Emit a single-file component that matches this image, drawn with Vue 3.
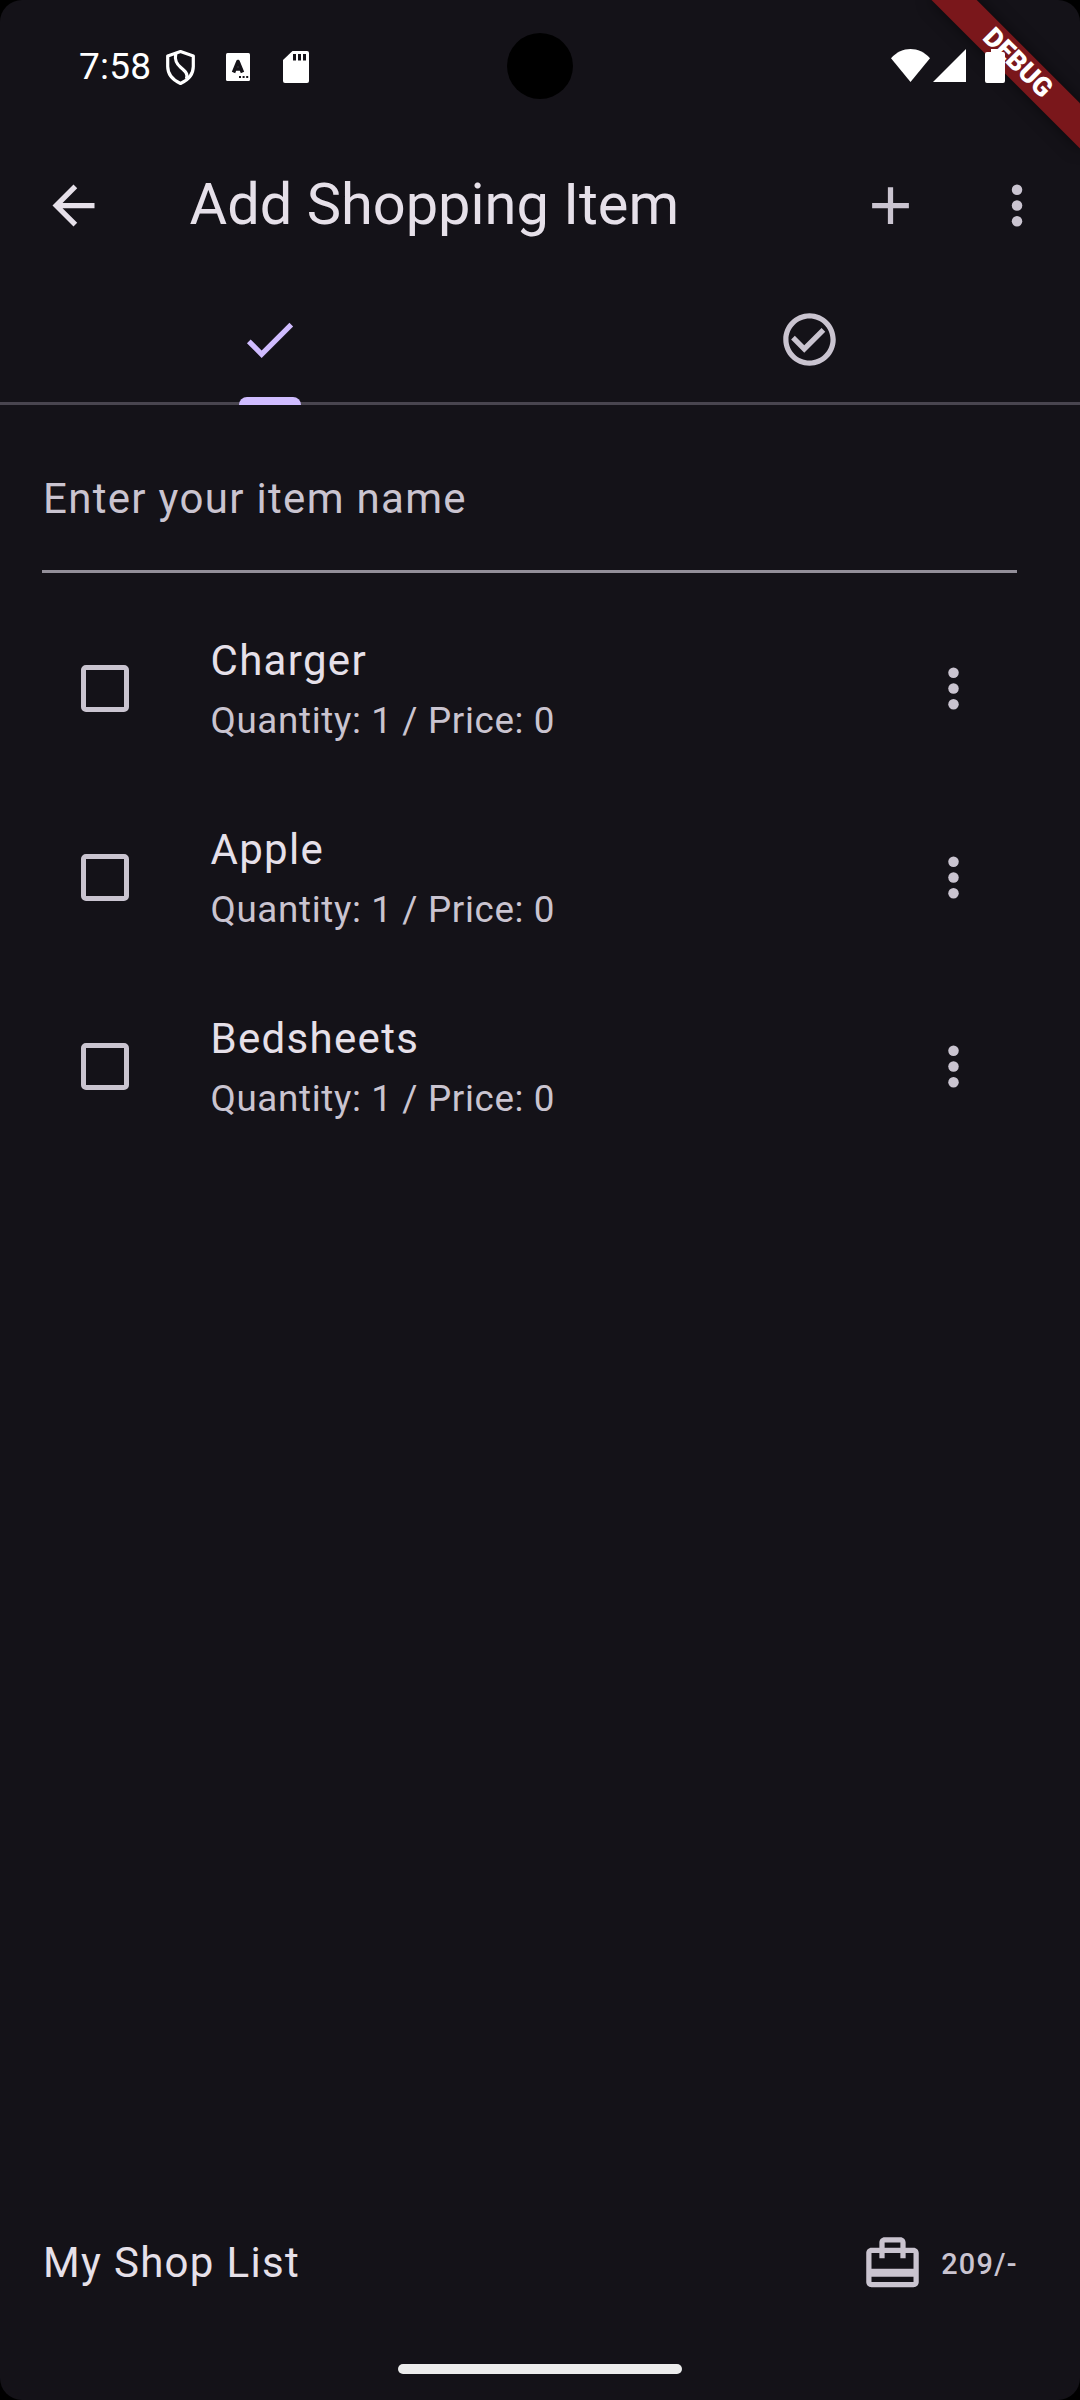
<script setup>
import { ref } from 'vue'

const items = ref([
  { name: 'Charger', quantity: 1, price: 0 },
  { name: 'Apple', quantity: 1, price: 0 },
  { name: 'Bedsheets', quantity: 1, price: 0 },
])
const total = ref(209)
</script>

<template>
  <div class="screen">
    <div class="ribbon-clip"><div class="ribbon">DEBUG</div></div>
    <div class="camera"></div>

    <header class="status">
      <span class="clock">7:58</span>
      <svg class="shield" viewBox="0 0 31 37" fill="none" stroke="#fff" stroke-width="3.2" stroke-linejoin="round">
        <path d="M15.500 2.600 2.700 7v10.500c0 7.500 5 13.500 12.800 17 7.800-3.500 12.800-9.500 12.800-17V7z" />
        <path d="M10.800 4.500c-1.500 7 1 10.500 5 14 4.500 3.800 7.700 6.500 5.500 11.500" />
      </svg>
      <svg class="letter" viewBox="0 0 24 28">
        <rect width="24" height="28" rx="1.500" fill="#fff" />
        <path d="M7.500 19.500 12 8.500l4.500 11M9 16h6" fill="none" stroke="#141218" stroke-width="3.600" stroke-linejoin="round" />
        <path d="M13 23h2v2h-2zM16.600 23h2v2h-2zM20.200 23h2v2h-2z" fill="#141218" />
      </svg>
      <svg class="card" viewBox="0 0 26 32">
        <path d="M9.500 0H24a2 2 0 0 1 2 2v28a2 2 0 0 1-2 2H2a2 2 0 0 1-2-2V9z" fill="#fff" />
        <path d="M10 3h3v6.500h-3zM15 3h3v6.500h-3zM20 3h3v6.500h-3z" fill="#141218" />
      </svg>
      <span class="grow"></span>
      <svg class="wifi" viewBox="0 0 39 33"><path d="M0 9.200C11-3 28-3 39 9.200L19.500 33z" fill="#fff" /></svg>
      <svg class="signal" viewBox="0 0 33 33"><path d="M33 0v33H0z" fill="#fff" /></svg>
      <svg class="battery" viewBox="0 0 20 34">
        <path d="M6 0h8v3h4a2 2 0 0 1 2 2v27a2 2 0 0 1-2 2H2a2 2 0 0 1-2-2V5a2 2 0 0 1 2-2h4z" fill="#fff" />
      </svg>
    </header>

    <nav class="appbar">
      <svg class="icon bright" viewBox="0 0 24 24"><path d="M20 11H7.830l5.590-5.590L12 4l-8 8 8 8 1.410-1.410L7.830 13H20z" /></svg>
      <h1>Add Shopping Item</h1>
      <svg class="icon" viewBox="0 0 24 24"><path d="M19 13h-6v6h-2v-6H5v-2h6V5h2v6h6z" /></svg>
      <svg class="icon" viewBox="0 0 24 24"><circle cx="12.200" cy="6" r="2" /><circle cx="12.200" cy="12" r="2" /><circle cx="12.200" cy="18" r="2" /></svg>
    </nav>

    <div class="tabs">
      <div class="tab active">
        <svg class="icon" viewBox="0 0 24 24"><path d="M9 16.170 4.830 12l-1.420 1.410L9 19 21 7l-1.410-1.410z" /></svg>
        <span class="indicator"></span>
      </div>
      <div class="tab">
        <svg class="icon" viewBox="0 0 24 24"><path d="M16.590 7.580 10 14.170l-3.590-3.580L5 12l5 5 8-8zM12 2C6.480 2 2 6.480 2 12s4.480 10 10 10 10-4.480 10-10S17.520 2 12 2zm0 18c-4.420 0-8-3.580-8-8s3.580-8 8-8 8 3.580 8 8-3.580 8-8 8z" /></svg>
      </div>
    </div>

    <div class="field">Enter your item name</div>

    <ul class="list">
      <li v-for="item in items" :key="item.name">
        <span class="checkbox"></span>
        <div class="text">
          <div class="name">{{ item.name }}</div>
          <div class="detail">Quantity: {{ item.quantity }} / Price: {{ item.price }}</div>
        </div>
        <svg class="icon" viewBox="0 0 24 24"><circle cx="12" cy="6" r="2" /><circle cx="12" cy="12" r="2" /><circle cx="12" cy="18" r="2" /></svg>
      </li>
    </ul>

    <footer class="summary">
      <span class="label">My Shop List</span>
      <svg class="icon" viewBox="0 0 24 24"><path d="M20 6h-3V4c0-1.110-.890-2-2-2H9c-1.110 0-2 .890-2 2v2H4c-1.110 0-2 .890-2 2v11c0 1.110.890 2 2 2h16c1.110 0 2-.890 2-2V8c0-1.110-.890-2-2-2zM9 4h6v2H9V4zm11 15H4v-2h16v2zm0-5H4V8h3v2h2V8h6v2h2V8h3v6z" /></svg>
      <span class="total">{{ total }}/-</span>
    </footer>
    <div class="home"></div>
  </div>
</template>

<style>
body {
  margin: 0;
  background: #000;
}
</style>

<style scoped>
.screen {
  position: relative;
  display: flex;
  flex-direction: column;
  box-sizing: border-box;
  width: 1080px;
  height: 2400px;
  overflow: hidden;
  border-radius: 22px;
  background: #141218;
  color: #e6e0e9;
  font-family: Roboto, sans-serif;
  font-size: 42px;
}
svg {
  display: block;
  flex: none;
}
.icon {
  width: 63px;
  height: 63px;
  fill: #cac4d0;
}
.icon.bright {
  fill: #e6e0e9;
}

.ribbon-clip {
  position: absolute;
  top: 0;
  right: 0;
  width: 260px;
  height: 260px;
  overflow: hidden;
}
.ribbon {
  position: absolute;
  left: 155px;
  top: 73px;
  width: 210px;
  height: 31.5px;
  transform-origin: 105px -73px;
  transform: rotate(45deg);
  background: #7a171b;
  box-shadow: 0 0 16px rgba(0, 0, 0, 0.5);
  color: #fff;
  font-size: 26.775px;
  font-weight: 900;
  line-height: 31.5px;
  text-align: center;
  text-indent: 1px;
}
.camera {
  position: absolute;
  left: 507px;
  top: 33px;
  width: 66px;
  height: 66px;
  border-radius: 50%;
  background: #000;
}

.status {
  position: relative;
  display: flex;
  flex: none;
  align-items: flex-start;
  box-sizing: border-box;
  height: 132px;
  padding: 49px 75px 0 79px;
  color: #fff;
}
.clock {
  width: 86px;
  font-size: 37px;
  letter-spacing: 0.2px;
  line-height: 35px;
  white-space: nowrap;
}
.shield {
  width: 31px;
  height: 37px;
}
.letter {
  width: 24px;
  height: 28px;
  margin: 4px 0 0 30px;
}
.card {
  width: 26px;
  height: 32px;
  margin: 2px 0 0 33px;
}
.grow {
  flex: 1;
}
.wifi {
  width: 39px;
  height: 33px;
}
.signal {
  width: 33px;
  height: 33px;
  margin-left: 3px;
}
.battery {
  width: 20px;
  height: 34px;
  margin-left: 19px;
}

.appbar {
  display: flex;
  flex: none;
  align-items: center;
  height: 147px;
  padding: 0 32px 0 42px;
}
.appbar h1 {
  flex: 1;
  margin: 0 0 0 84.5px;
  padding-bottom: 3px;
  font-size: 57.75px;
  font-weight: 400;
  line-height: 72px;
}
.appbar .icon + .icon {
  margin-left: 63px;
}

.tabs {
  display: flex;
  flex: none;
  box-sizing: border-box;
  height: 126px;
  border-bottom: 3px solid #49454f;
}
.tab {
  position: relative;
  display: flex;
  flex: 1;
  justify-content: center;
  padding: 29px 1px 0 0;
}
.tab.active .icon {
  fill: #d0bcff;
}
.indicator {
  position: absolute;
  left: 239px;
  bottom: -3px;
  width: 62px;
  height: 8px;
  border-radius: 8px 8px 0 0;
  background: #d0bcff;
}

.field {
  flex: none;
  box-sizing: border-box;
  height: 126px;
  margin: 42px 63px 0 42px;
  border-bottom: 3px solid #938f99;
  padding: 20px 0 0 1px;
  color: #cac4d0;
  line-height: 63px;
  letter-spacing: 1.3125px;
}
.list {
  flex: 1;
  margin: 21px 0 0;
  padding: 0;
  list-style: none;
}
.list li {
  display: flex;
  align-items: center;
  box-sizing: border-box;
  height: 189px;
  padding: 0 95px 0 81px;
}
.checkbox {
  box-sizing: border-box;
  width: 48px;
  height: 47px;
  border: 5.25px solid #cac4d0;
  border-radius: 5px;
}
.text {
  flex: 1;
  margin-left: 81.5px;
}
.name {
  padding-bottom: 4px;
  line-height: 59px;
  letter-spacing: 1.3125px;
}
.detail {
  color: #cac4d0;
  font-size: 36.75px;
  line-height: 53px;
  letter-spacing: 0.656px;
}

.summary {
  display: flex;
  flex: none;
  align-items: center;
  height: 63px;
  margin-bottom: 69px;
  padding: 0 62px 0 42px;
}
.label {
  flex: 1;
  padding: 0 0 2px 1px;
  letter-spacing: 1.3125px;
}
.total {
  margin-left: 17px;
  color: #cac4d0;
  font-size: 28.875px;
  font-weight: 500;
  letter-spacing: 1.3125px;
}
.home {
  flex: none;
  align-self: center;
  width: 284px;
  height: 10px;
  margin-bottom: 26px;
  border-radius: 5px;
  background: #ececec;
}
</style>
